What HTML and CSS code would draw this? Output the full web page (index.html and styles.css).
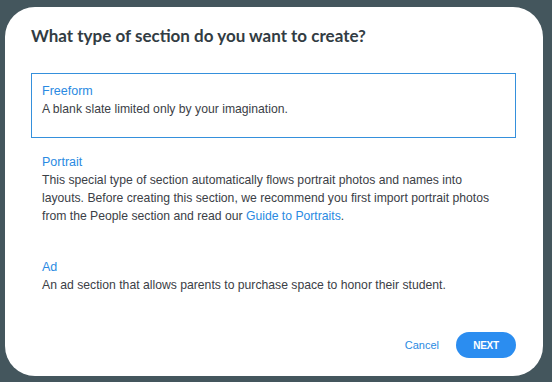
FILE: index.html
```html
<!DOCTYPE html>
<html lang="en">
<head>
    <meta charset="UTF-8">
    <meta name="viewport" content="width=device-width, initial-scale=1.0">
    <title>New section</title>
    <link rel="stylesheet" href="styles.css">
</head>
<body>
    <div class="modal">
        <h1 class="modal-title">What type of section do you want to create?</h1>
        <div class="option-list">
            <div class="option option-selected">
                <div class="option-name">Freeform</div>
                <p class="option-text">A blank slate limited only by your imagination.</p>
            </div>
            <div class="option">
                <div class="option-name">Portrait</div>
                <p class="option-text">This special type of section automatically flows portrait photos and names into layouts. Before creating this section, we recommend you first import portrait photos from the People section and read our <a href="#" class="link">Guide to Portraits</a>.</p>
            </div>
            <div class="option">
                <div class="option-name">Ad</div>
                <p class="option-text">An ad section that allows parents to purchase space to honor their student.</p>
            </div>
        </div>
        <div class="modal-actions">
            <button class="cancel-button">Cancel</button>
            <button class="next-button">NEXT</button>
        </div>
    </div>
</body>
</html>
```

FILE: styles.css
```css
body {
    margin: 0;
    height: 382px;
    padding: 7px 9px 6px 5px;
    box-sizing: border-box;
    background-color: #44565d;
    font-family: "Liberation Sans", Arial, sans-serif;
    color: #3b4046;
}
.modal {
    height: 369px;
    box-sizing: border-box;
    background: #fff;
    border-radius: 30px;
    padding: 17px 27px 0 26px;
    display: flex;
    flex-direction: column;
}
.modal-title {
    margin: 0;
    font-family: Lato, sans-serif;
    font-size: 17px;
    font-weight: 700;
    color: #323c43;
    line-height: 24px;
}
.option-list {
    margin-top: 25px;
    display: flex;
    flex-direction: column;
    gap: 6px;
}
.option {
    border-width: 1px;
    border-style: solid;
    border-color: #fff;
    padding: 8px 10px 17px 10px;
}
.option-selected {
    border-color: #3590dc;
    padding-bottom: 19px;
}
.option-name {
    color: #2a8ae2;
    font-size: 12.5px;
    line-height: 18px;
}
.option-text {
    margin: 0;
    max-width: 452px;
    font-size: 12.2px;
    line-height: 18px;
}
.link {
    color: #2a8ae2;
    text-decoration: none;
}
.modal-actions {
    margin-top: auto;
    margin-bottom: 18px;
    display: flex;
    justify-content: flex-end;
    align-items: center;
    gap: 17px;
}
.cancel-button {
    border: none;
    background: none;
    color: #2a8ae2;
    font-family: inherit;
    font-size: 11px;
    padding: 0;
    cursor: pointer;
}
.next-button {
    border: none;
    background: #2b8df0;
    color: #fff;
    font-family: inherit;
    font-size: 10px;
    font-weight: 700;
    letter-spacing: -0.3px;
    width: 60px;
    height: 26px;
    border-radius: 13px;
    cursor: pointer;
}
```
